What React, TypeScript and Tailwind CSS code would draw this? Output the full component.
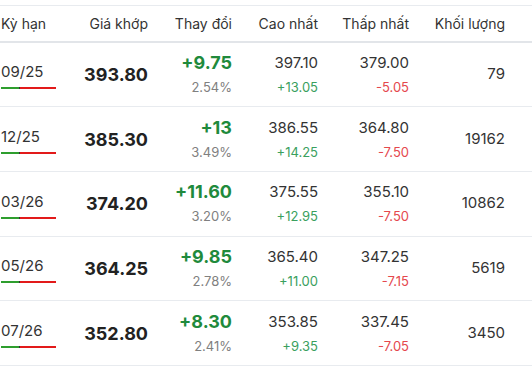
import React from "react";

const rows = [
  { k: "09/25", p: "393.80", c: "+9.75", pct: "2.54%", hi: "397.10", hic: "+13.05", lo: "379.00", loc: "-5.05", v: "79" },
  { k: "12/25", p: "385.30", c: "+13", pct: "3.49%", hi: "386.55", hic: "+14.25", lo: "364.80", loc: "-7.50", v: "19162" },
  { k: "03/26", p: "374.20", c: "+11.60", pct: "3.20%", hi: "375.55", hic: "+12.95", lo: "355.10", loc: "-7.50", v: "10862" },
  { k: "05/26", p: "364.25", c: "+9.85", pct: "2.78%", hi: "365.40", hic: "+11.00", lo: "347.25", loc: "-7.15", v: "5619" },
  { k: "07/26", p: "352.80", c: "+8.30", pct: "2.41%", hi: "353.85", hic: "+9.35", lo: "337.45", loc: "-7.05", v: "3450" },
];

const grid = "grid grid-cols-[60px_88px_84px_86px_91px_96px] pr-[27px]";

export default function App() {
  return (
    <div className="w-[532px] h-[370px] bg-white text-[#222] overflow-hidden" style={{ fontFamily: "Inter, 'Noto Sans', sans-serif" }}>
      <div className="pt-[5px]">
        <div className={`${grid} h-[37.5px] items-center border-t border-[#e8ebef] border-b-2 border-b-[#e2e5e9] text-[14px] text-[#333]`}>
          <div className="pl-[1px] pt-[1px]">Kỳ hạn</div>
          <div className="text-right pt-[1px]">Giá khớp</div>
          <div className="text-right pt-[1px]">Thay đổi</div>
          <div className="text-right pt-[1px]">Cao nhất</div>
          <div className="text-right pt-[1px]">Thấp nhất</div>
          <div className="text-right pt-[1px]">Khối lượng</div>
        </div>
        {rows.map((r) => (
          <div key={r.k} className={`${grid} h-[64.7px] items-center border-b border-[#e8ebef]`}>
            <div className="pl-[1px] pt-[4px]">
              <div className="text-[15px] text-[#333] leading-[18px]">{r.k}</div>
              <div className="flex w-[55px] h-[2px] mt-[6px]">
                <div className="w-[18px] bg-[#2e9e2e]" />
                <div className="w-[1px] bg-[#333]" />
                <div className="flex-1 bg-[#e21a1a]" />
              </div>
            </div>
            <div className="text-right text-[18px] font-bold text-[#222]">{r.p}</div>
            <div className="text-right pt-[1px]">
              <div className="text-[18px] font-bold text-[#1f8a3c] leading-[22px]">{r.c}</div>
              <div className="text-[13px] text-[#808080] leading-[22px] mt-[2px]">{r.pct}</div>
            </div>
            <div className="text-right pt-[1px]">
              <div className="text-[15px] text-[#333] leading-[22px]">{r.hi}</div>
              <div className="text-[13px] text-[#3aa05e] leading-[22px] mt-[2px]">{r.hic}</div>
            </div>
            <div className="text-right pt-[1px]">
              <div className="text-[15px] text-[#333] leading-[22px]">{r.lo}</div>
              <div className="text-[13px] text-[#e5484d] leading-[22px] mt-[2px]">{r.loc}</div>
            </div>
            <div className="text-right text-[15px] text-[#333]">{r.v}</div>
          </div>
        ))}
      </div>
    </div>
  );
}
